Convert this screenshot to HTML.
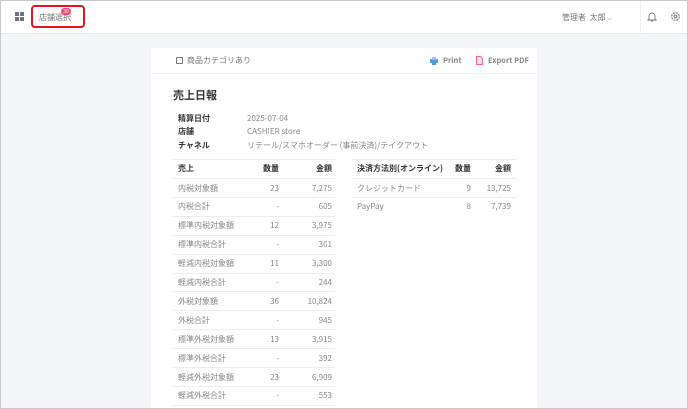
<!DOCTYPE html>
<html><head><meta charset="utf-8"><style>
*{margin:0;padding:0;box-sizing:border-box}
html,body{width:688px;height:409px;overflow:hidden}
body{font-family:"Noto Sans CJK JP","Liberation Sans",sans-serif;background:#f4f5f9;position:relative;color:#555}
.frame{position:absolute;left:0;top:0;width:688px;height:409px;border:1px solid #c8c8c8;pointer-events:none;z-index:9}
.hdr{position:absolute;left:0;top:0;width:688px;height:34px;background:#fff;border-bottom:1px solid #e8e9ee}
.a{position:absolute;white-space:nowrap;line-height:1.2}
.card{position:absolute;left:151px;top:48px;width:386px;height:361px;background:#fff}
.t{font-size:8px;color:#888}
.b{font-size:8px;color:#333;font-weight:bold}
.line{position:absolute;height:1px;background:#ebedf5}
</style></head><body>
<div class="hdr">
  <svg class="a" style="left:15px;top:12px" width="9" height="9"><rect x="0" y="0" width="4" height="4" fill="#6b7280"/><rect x="5" y="0" width="4" height="4" fill="#6b7280"/><rect x="0" y="5" width="4" height="4" fill="#6b7280"/><rect x="5" y="5" width="4" height="4" fill="#6b7280"/></svg>
  <div class="a" style="left:31px;top:5px;width:54px;height:23px;border:2px solid #e8131f;border-radius:4px"></div>
  <div class="a t" style="left:39px;top:13px;color:#777">店舗選択</div>
  <div class="a" style="left:61px;top:8px;width:10px;height:7px;border-radius:4px;background:#f0437a;color:#fff;font-size:5px;text-align:center;line-height:7px">30</div>
  <div class="a t" style="left:562px;top:13px;color:#777">管理者&nbsp;&nbsp;太郎 <span style="font-size:6px">⌵</span></div>
  <div class="a" style="left:640px;top:0;width:1px;height:34px;background:#eee"></div>
  <svg class="a" style="left:647px;top:11px" width="10" height="11" viewBox="0 0 10 11"><path d="M2 8V5a3 3 0 0 1 6 0v3l1 1H1z M4 10h2" fill="none" stroke="#777" stroke-width="0.9"/></svg>
  <svg class="a" style="left:670px;top:11px" width="11" height="11" viewBox="0 0 11 11"><circle cx="5.5" cy="5.5" r="3.8" fill="none" stroke="#777" stroke-width="1.2" stroke-dasharray="2 1"/><circle cx="5.5" cy="5.5" r="1.5" fill="none" stroke="#777" stroke-width="0.9"/></svg>
</div>
<div class="card">
  <div class="a" style="left:25px;top:9px;width:7px;height:7px;border:1px solid #777;border-radius:1px"></div>
  <div class="a t" style="left:36px;top:8px;color:#777">商品カテゴリあり</div>
  <svg class="a" style="left:279px;top:9px" width="8" height="8"><rect x="0" y="2" width="8" height="4" rx="1" fill="#4a9de0"/><rect x="2" y="0" width="4" height="3" fill="#8cc3ef"/><rect x="2" y="5" width="4" height="3" fill="#4a9de0"/></svg>
  <div class="a" style="left:292px;top:8px;font-size:7.5px;font-weight:bold;color:#888">Print</div>
  <svg class="a" style="left:325px;top:8px" width="7" height="9"><path d="M0.5 0.5h4l2 2v6h-6z" fill="#fde0e6" stroke="#f06a8a" stroke-width="1"/></svg>
  <div class="a" style="left:337px;top:8px;font-size:7.5px;font-weight:bold;color:#888">Export PDF</div>
  <div class="line" style="left:0;top:25px;width:386px;background:#eef0f5"></div>
  <div class="a" style="left:22px;top:41px;font-size:11px;font-weight:bold;color:#333">売上日報</div>
  <div class="a b" style="left:27px;top:66px">精算日付</div><div class="a t" style="left:96px;top:66px">2025-07-04</div>
  <div class="a b" style="left:27px;top:79px">店舗</div><div class="a t" style="left:96px;top:79px">CASHIER store</div>
  <div class="a b" style="left:27px;top:93px">チャネル</div><div class="a t" style="left:96px;top:93px">リテール/スマホオーダー (事前決済)/テイクアウト</div>
</div>
<div class="frame"></div>
<script>
var c=document.querySelector('.card');
function add(h){c.insertAdjacentHTML('beforeend',h)}
var L=[["内税対象額","23","7,275"],["内税合計","-","605"],["標準内税対象額","12","3,975"],["標準内税合計","-","361"],["軽減内税対象額","11","3,300"],["軽減内税合計","-","244"],["外税対象額","36","10,824"],["外税合計","-","945"],["標準外税対象額","13","3,915"],["標準外税合計","-","392"],["軽減外税対象額","23","6,909"],["軽減外税合計","-","553"]];
add('<div class="line" style="left:22px;top:111px;width:162px"></div>');
add('<div class="a b" style="left:27px;top:116px">売上</div><div class="a b" style="left:100px;top:116px;width:28px;text-align:right">数量</div><div class="a b" style="left:140px;top:116px;width:41px;text-align:right">金額</div>');
add('<div class="line" style="left:22px;top:130px;width:162px"></div>');
for(var i=0;i<L.length;i++){var y=130+i*18.9;
add('<div class="a t" style="left:27px;top:'+(y+5.5)+'px">'+L[i][0]+'</div><div class="a t" style="left:100px;top:'+(y+5.5)+'px;width:28px;text-align:right">'+L[i][1]+'</div><div class="a t" style="left:140px;top:'+(y+5.5)+'px;width:41px;text-align:right">'+L[i][2]+'</div>');
add('<div class="line" style="left:22px;top:'+Math.round(y+18.9)+'px;width:162px"></div>');}
add('<div class="line" style="left:201px;top:111px;width:164px"></div>');
add('<div class="a b" style="left:206px;top:116px">決済方法別(オンライン)</div><div class="a b" style="left:292px;top:116px;width:28px;text-align:right">数量</div><div class="a b" style="left:320px;top:116px;width:40px;text-align:right">金額</div>');
add('<div class="line" style="left:201px;top:130px;width:164px"></div>');
var R=[["クレジットカード","9","13,725"],["PayPay","8","7,739"]];
for(var i=0;i<2;i++){var y=130+i*18.9;
add('<div class="a t" style="left:206px;top:'+(y+5.5)+'px">'+R[i][0]+'</div><div class="a t" style="left:292px;top:'+(y+5.5)+'px;width:28px;text-align:right">'+R[i][1]+'</div><div class="a t" style="left:320px;top:'+(y+5.5)+'px;width:40px;text-align:right">'+R[i][2]+'</div>');}
add('<div class="line" style="left:201px;top:149px;width:164px"></div>');
</script>
</body></html>
